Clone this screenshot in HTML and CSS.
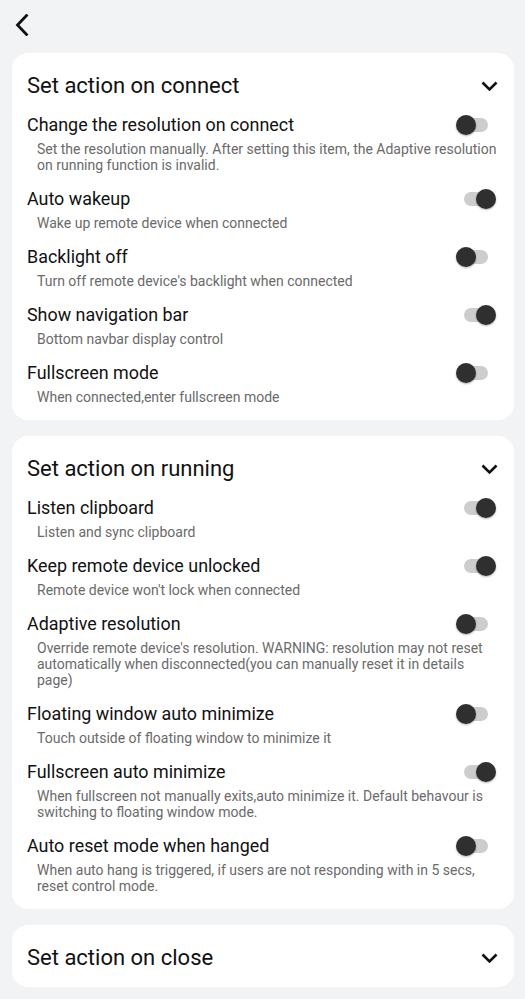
FILE: index.html
```html
<!DOCTYPE html>
<html lang="en">
<head>
<meta charset="utf-8">
<title>Settings</title>
<link rel="stylesheet" href="styles.css">
</head>
<body>
<div class="topbar">
  <svg class="back" width="14" height="22" viewBox="0 0 14 22"><path d="M11.5 1.5 L2.5 11 L11.5 20.5" fill="none" stroke="#111" stroke-width="2.8" stroke-linecap="square" stroke-linejoin="miter"/></svg>
</div>

<section class="card">
  <div class="card-head">
    <h2>Set action on connect</h2>
    <svg class="chev" width="17" height="11" viewBox="0 0 17 11"><path d="M1.5 1.5 L8.5 8.5 L15.5 1.5" fill="none" stroke="#111" stroke-width="2.6"/></svg>
  </div>
  <div class="item">
    <div class="item-row"><span class="item-title">Change the resolution on connect</span><span class="switch"></span></div>
    <p class="desc">Set the resolution manually. After setting this item, the Adaptive resolution on running function is invalid.</p>
  </div>
  <div class="item">
    <div class="item-row"><span class="item-title">Auto wakeup</span><span class="switch on"></span></div>
    <p class="desc">Wake up remote device when connected</p>
  </div>
  <div class="item">
    <div class="item-row"><span class="item-title">Backlight off</span><span class="switch"></span></div>
    <p class="desc">Turn off remote device's backlight when connected</p>
  </div>
  <div class="item">
    <div class="item-row"><span class="item-title">Show navigation bar</span><span class="switch on"></span></div>
    <p class="desc">Bottom navbar display control</p>
  </div>
  <div class="item">
    <div class="item-row"><span class="item-title">Fullscreen mode</span><span class="switch"></span></div>
    <p class="desc">When connected,enter fullscreen mode</p>
  </div>
</section>

<section class="card">
  <div class="card-head">
    <h2>Set action on running</h2>
    <svg class="chev" width="17" height="11" viewBox="0 0 17 11"><path d="M1.5 1.5 L8.5 8.5 L15.5 1.5" fill="none" stroke="#111" stroke-width="2.6"/></svg>
  </div>
  <div class="item">
    <div class="item-row"><span class="item-title">Listen clipboard</span><span class="switch on"></span></div>
    <p class="desc">Listen and sync clipboard</p>
  </div>
  <div class="item">
    <div class="item-row"><span class="item-title">Keep remote device unlocked</span><span class="switch on"></span></div>
    <p class="desc">Remote device won't lock when connected</p>
  </div>
  <div class="item">
    <div class="item-row"><span class="item-title">Adaptive resolution</span><span class="switch"></span></div>
    <p class="desc">Override remote device's resolution. WARNING: resolution may not reset automatically when disconnected(you can manually reset it in details page)</p>
  </div>
  <div class="item">
    <div class="item-row"><span class="item-title">Floating window auto minimize</span><span class="switch"></span></div>
    <p class="desc">Touch outside of floating window to minimize it</p>
  </div>
  <div class="item">
    <div class="item-row"><span class="item-title">Fullscreen auto minimize</span><span class="switch on"></span></div>
    <p class="desc">When fullscreen not manually exits,auto minimize it. Default behavour is switching to floating window mode.</p>
  </div>
  <div class="item">
    <div class="item-row"><span class="item-title">Auto reset mode when hanged</span><span class="switch"></span></div>
    <p class="desc">When auto hang is triggered, if users are not responding with in 5 secs, reset control mode.</p>
  </div>
</section>

<section class="card collapsed">
  <div class="card-head">
    <h2>Set action on close</h2>
    <svg class="chev" width="17" height="11" viewBox="0 0 17 11"><path d="M1.5 1.5 L8.5 8.5 L15.5 1.5" fill="none" stroke="#111" stroke-width="2.6"/></svg>
  </div>
</section>
</body>
</html>
```

FILE: styles.css
```css
* { box-sizing: border-box; }
html, body { margin: 0; padding: 0; }
body {
  background: #f2f3f5;
  font-family: Roboto, "Noto Sans", "Liberation Sans", sans-serif;
  color: #111;
  width: 525px;
  min-height: 999px;
}
.topbar {
  height: 53px;
  display: flex;
  align-items: center;
  padding-left: 15px;
  padding-bottom: 4px;
}
.back { display: block; }
.card {
  background: #fff;
  border-radius: 16px;
  margin: 0 11px 16px 12px;
  padding: 19px 16px 15px 15px;
}
.card-head {
  display: flex;
  align-items: center;
  justify-content: space-between;
  height: 28px;
}
.card-head h2 {
  margin: 0;
  font-size: 22px;
  font-weight: 400;
  line-height: 28px;
}
.chev { display: block; margin-top: 1px; }
.card-head + .item { margin-top: 14px; }
.item + .item { margin-top: 15px; }
.item-row {
  display: flex;
  align-items: center;
  justify-content: space-between;
  height: 22px;
}
.item-title {
  font-size: 17.9px;
  line-height: 22px;
}
.desc {
  margin: 5px 0 0 10px;
  padding-right: 1px;
  font-size: 14px;
  line-height: 16px;
  color: #6a6a6a;
}
.switch {
  position: relative;
  width: 40px;
  height: 20px;
  flex: none;
  margin-right: 2px;
}
.switch::before {
  content: "";
  position: absolute;
  left: 8px;
  top: 3px;
  width: 24px;
  height: 14px;
  border-radius: 7px;
  background: #cdcdcd;
}
.switch::after {
  content: "";
  position: absolute;
  left: 0;
  top: 0;
  width: 20px;
  height: 20px;
  border-radius: 50%;
  background: #2f2f2f;
  box-shadow: 0 1px 2px rgba(0,0,0,0.3);
}
.switch.on::after { left: 20px; }
```
